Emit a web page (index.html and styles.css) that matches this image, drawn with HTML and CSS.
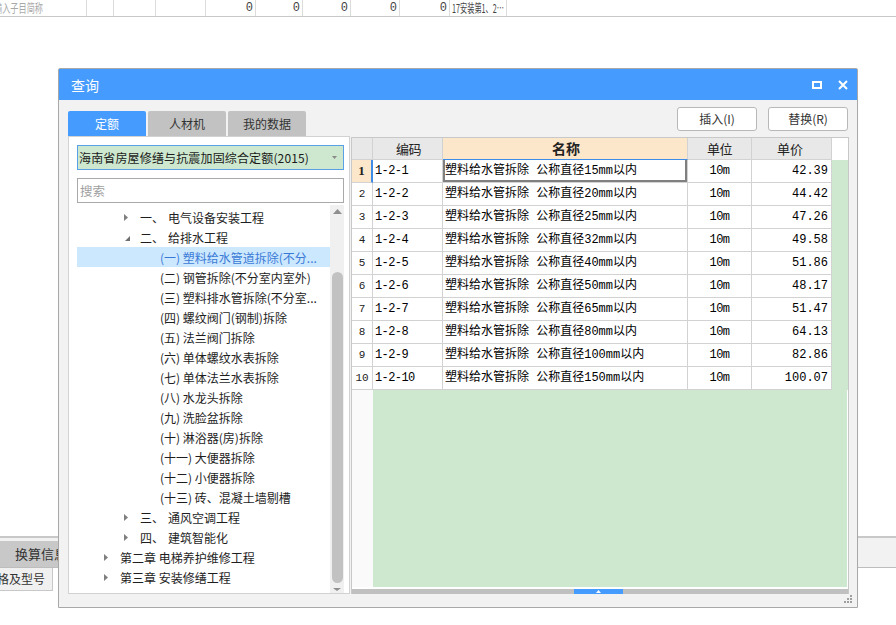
FILE: index.html
```html
<!DOCTYPE html>
<html lang="zh">
<head>
<meta charset="utf-8">
<title>查询</title>
<link rel="stylesheet" href="styles.css">
</head>
<body>
<div class="page">
  <div class="bg-row">
    <div class="bc c1 lbl"><span class="cond">输入子目简称</span></div>
    <div class="bc c2"></div>
    <div class="bc c3"></div>
    <div class="bc c4"></div>
    <div class="bc c5 num">0</div>
    <div class="bc c6 num">0</div>
    <div class="bc c7 num">0</div>
    <div class="bc c8 num">0</div>
    <div class="bc c9 num">0</div>
    <div class="bc c10 txt"><span class="cond narrow">17安装第1、2…</span></div>
    <div class="bc c11"></div>
  </div>
  <div class="bg-bottom">
    <div class="bg-tabs"><div class="bg-tab">换算信息</div></div>
    <div class="bg-head"><div class="bg-hc">规格及型号</div></div>
  </div>
</div>

<div class="dialog">
  <div class="titlebar">
    <span class="title">查询</span>
    <div class="tb-icons">
      <svg width="10" height="8" viewBox="0 0 10 8"><rect x="1" y="1" width="8" height="6" fill="none" stroke="#fff" stroke-width="2"/></svg>
      <svg width="10" height="10" viewBox="0 0 10 10"><path d="M1 1L9 9M9 1L1 9" stroke="#fff" stroke-width="2"/></svg>
    </div>
  </div>
  <div class="dbody">
    <div class="toolbar">
      <div class="tabs">
        <div class="tab active">定额</div>
        <div class="tab">人材机</div>
        <div class="tab">我的数据</div>
      </div>
      <div class="btns">
        <div class="btn">插入(I)</div>
        <div class="btn">替换(R)</div>
      </div>
    </div>
    <div class="main">
      <div class="left">
        <div class="combo">
          <span class="combo-text">海南省房屋修缮与抗震加固综合定额(2015)</span>
          <svg width="5" height="3" viewBox="0 0 5 3"><path d="M0 0H5L2.5 3Z" fill="#8a8a8a"/></svg>
        </div>
        <div class="search">搜索</div>
        <div class="tree">
          <div class="tree-list">
            <div class="tr lv1"><span class="tw"><svg width="4" height="7" viewBox="0 0 4 7"><path d="M0 0L4 3.5L0 7Z" fill="#7f7f7f"/></svg></span><span class="tn">一、</span><span>电气设备安装工程</span></div>
            <div class="tr lv1"><span class="tw"><svg class="exp" width="5" height="5" viewBox="0 0 5 5"><path d="M5 0V5H0Z" fill="#6f6f6f"/></svg></span><span class="tn">二、</span><span>给排水工程</span></div>
            <div class="tr lv2 sel"><span class="tw"></span><span>(一) 塑料给水管道拆除(不分...</span></div>
            <div class="tr lv2"><span class="tw"></span><span>(二) 钢管拆除(不分室内室外)</span></div>
            <div class="tr lv2"><span class="tw"></span><span>(三) 塑料排水管拆除(不分室...</span></div>
            <div class="tr lv2"><span class="tw"></span><span>(四) 螺纹阀门(钢制)拆除</span></div>
            <div class="tr lv2"><span class="tw"></span><span>(五) 法兰阀门拆除</span></div>
            <div class="tr lv2"><span class="tw"></span><span>(六) 单体螺纹水表拆除</span></div>
            <div class="tr lv2"><span class="tw"></span><span>(七) 单体法兰水表拆除</span></div>
            <div class="tr lv2"><span class="tw"></span><span>(八) 水龙头拆除</span></div>
            <div class="tr lv2"><span class="tw"></span><span>(九) 洗脸盆拆除</span></div>
            <div class="tr lv2"><span class="tw"></span><span>(十) 淋浴器(房)拆除</span></div>
            <div class="tr lv2"><span class="tw"></span><span>(十一) 大便器拆除</span></div>
            <div class="tr lv2"><span class="tw"></span><span>(十二) 小便器拆除</span></div>
            <div class="tr lv2"><span class="tw"></span><span>(十三) 砖、混凝土墙剔槽</span></div>
            <div class="tr lv1"><span class="tw"><svg width="4" height="7" viewBox="0 0 4 7"><path d="M0 0L4 3.5L0 7Z" fill="#7f7f7f"/></svg></span><span class="tn">三、</span><span>通风空调工程</span></div>
            <div class="tr lv1"><span class="tw"><svg width="4" height="7" viewBox="0 0 4 7"><path d="M0 0L4 3.5L0 7Z" fill="#7f7f7f"/></svg></span><span class="tn">四、</span><span>建筑智能化</span></div>
            <div class="tr lv0"><span class="tw"><svg width="4" height="7" viewBox="0 0 4 7"><path d="M0 0L4 3.5L0 7Z" fill="#7f7f7f"/></svg></span><span>第二章 电梯养护维修工程</span></div>
            <div class="tr lv0"><span class="tw"><svg width="4" height="7" viewBox="0 0 4 7"><path d="M0 0L4 3.5L0 7Z" fill="#7f7f7f"/></svg></span><span>第三章 安装修缮工程</span></div>
          </div>
          <div class="vscroll">
            <div class="varrow up"><svg width="9" height="5" viewBox="0 0 9 5"><path d="M0 5L4.5 0L9 5Z" fill="#8f8f8f"/></svg></div>
            <div class="vthumb"></div>
            <div class="varrow down"><svg width="8" height="3" viewBox="0 0 8 3"><path d="M0 0H8L4 3Z" fill="#8f8f8f"/></svg></div>
          </div>
        </div>
      </div>
      <div class="grid">
        <div class="grid-body">
          <div class="gr head">
            <div class="gc rn"></div>
            <div class="gc code">编码</div>
            <div class="gc name">名称</div>
            <div class="gc unit">单位</div>
            <div class="gc price">单价</div>
            <div class="gc tail"></div>
          </div>
          <div class="gr cur"><div class="gc rn">1</div><div class="gc code">1-2-1</div><div class="gc name">塑料给水管拆除 公称直径15mm以内</div><div class="gc unit">10m</div><div class="gc price">42.39</div><div class="gc tail"></div></div>
          <div class="gr"><div class="gc rn">2</div><div class="gc code">1-2-2</div><div class="gc name">塑料给水管拆除 公称直径20mm以内</div><div class="gc unit">10m</div><div class="gc price">44.42</div><div class="gc tail"></div></div>
          <div class="gr"><div class="gc rn">3</div><div class="gc code">1-2-3</div><div class="gc name">塑料给水管拆除 公称直径25mm以内</div><div class="gc unit">10m</div><div class="gc price">47.26</div><div class="gc tail"></div></div>
          <div class="gr"><div class="gc rn">4</div><div class="gc code">1-2-4</div><div class="gc name">塑料给水管拆除 公称直径32mm以内</div><div class="gc unit">10m</div><div class="gc price">49.58</div><div class="gc tail"></div></div>
          <div class="gr"><div class="gc rn">5</div><div class="gc code">1-2-5</div><div class="gc name">塑料给水管拆除 公称直径40mm以内</div><div class="gc unit">10m</div><div class="gc price">51.86</div><div class="gc tail"></div></div>
          <div class="gr"><div class="gc rn">6</div><div class="gc code">1-2-6</div><div class="gc name">塑料给水管拆除 公称直径50mm以内</div><div class="gc unit">10m</div><div class="gc price">48.17</div><div class="gc tail"></div></div>
          <div class="gr"><div class="gc rn">7</div><div class="gc code">1-2-7</div><div class="gc name">塑料给水管拆除 公称直径65mm以内</div><div class="gc unit">10m</div><div class="gc price">51.47</div><div class="gc tail"></div></div>
          <div class="gr"><div class="gc rn">8</div><div class="gc code">1-2-8</div><div class="gc name">塑料给水管拆除 公称直径80mm以内</div><div class="gc unit">10m</div><div class="gc price">64.13</div><div class="gc tail"></div></div>
          <div class="gr"><div class="gc rn">9</div><div class="gc code">1-2-9</div><div class="gc name">塑料给水管拆除 公称直径100mm以内</div><div class="gc unit">10m</div><div class="gc price">82.86</div><div class="gc tail"></div></div>
          <div class="gr"><div class="gc rn">10</div><div class="gc code">1-2-10</div><div class="gc name">塑料给水管拆除 公称直径150mm以内</div><div class="gc unit">10m</div><div class="gc price">100.07</div><div class="gc tail"></div></div>
          <div class="gfill"><div class="gfill-rn"></div><div class="gfill-green"></div></div>
        </div>
        <div class="hgap"></div>
        <div class="hscroll"><div class="hthumb"><svg width="5" height="3" viewBox="0 0 5 3"><path d="M0 3L2.5 0L5 3Z" fill="#fff"/></svg></div></div>
      </div>
    </div>
  </div>
  <svg class="grip" width="8" height="8" viewBox="0 0 8 8" fill="#a0a0a0">
    <rect x="6" y="0" width="2" height="2"/>
    <rect x="3" y="3" width="2" height="2"/><rect x="6" y="3" width="2" height="2"/>
    <rect x="0" y="6" width="2" height="2"/><rect x="3" y="6" width="2" height="2"/><rect x="6" y="6" width="2" height="2"/>
  </svg>
</div>
</body>
</html>
```

FILE: styles.css
```css
* { box-sizing: border-box; }
html, body { margin: 0; padding: 0; }
body {
  width: 896px;
  height: 625px;
  overflow: hidden;
  background: #fff;
  position: relative;
  font-family: "Noto Sans CJK SC", "Noto Sans", sans-serif;
  font-size: 12px;
  color: #1e1e1e;
}
.page { height: 625px; }

/* background sheet */
.bg-row {
  display: flex;
  height: 17px;
  border-bottom: 1px solid #c8c8c8;
  line-height: 16px;
  font-size: 12px;
}
.bc { flex: none; border-right: 1px solid #dcdcdc; white-space: nowrap; overflow: hidden; }
.c1 { width: 87px; }
.c2 { width: 27px; }
.c3 { width: 42px; }
.c4 { width: 50px; }
.c5 { width: 50px; }
.c6 { width: 47px; }
.c7 { width: 48px; }
.c8 { width: 49px; }
.c9 { width: 50px; }
.c10 { width: 57px; }
.c11 { flex: 1; border-right: none; }
.lbl { color: #a8a8a8; }
.cond {
  display: inline-block;
  transform: scaleX(0.68);
  transform-origin: left center;
}
.lbl .cond { margin-left: -6px; }
.cond.narrow { transform: scaleX(0.6); }
.num { text-align: right; padding-right: 2px; color: #444; font-family: "Liberation Mono", monospace; }
.txt { color: #444; padding-left: 2px; }

.bg-bottom { margin-top: 519px; }
.bg-tabs {
  display: flex;
  height: 32px;
  border-top: 2px solid #c8c8c8;
  border-bottom: 1px solid #bdbdbd;
  background: #f2f2f2;
}
.bg-tab {
  width: 120px;
  margin-top: 3px;
  background: #c8c8c8;
  padding-left: 15px;
  line-height: 26px;
  font-size: 13px;
  color: #333;
}
.bg-head { display: flex; height: 23px; }
.bg-hc {
  width: 53px;
  background: #f0f0f0;
  border-right: 1px solid #c8c8c8;
  border-bottom: 1px solid #c8c8c8;
  line-height: 22px;
  font-size: 12px;
  color: #333;
  white-space: nowrap;
  overflow: hidden;
  text-indent: -15px;
}

/* dialog window */
.dialog {
  position: absolute;
  left: 58px;
  top: 68px;
  width: 800px;
  height: 540px;
  border: 1px solid #a8a8a8;
  border-radius: 2px 2px 0 0;
  background: #f2f2f2;
  display: flex;
  flex-direction: column;
}
.titlebar {
  height: 31px;
  flex: none;
  background: #459cfe;
  display: flex;
  align-items: center;
  padding: 0 9px 0 12px;
  color: #fff;
  font-size: 14px;
}
.title { flex: 1; }
.tb-icons { display: flex; align-items: center; gap: 16px; }
.tb-icons svg { display: block; }

.dbody { flex: 1; display: flex; flex-direction: column; }
.toolbar {
  height: 36px;
  flex: none;
  display: flex;
  justify-content: space-between;
  padding: 0 9px;
}
.tabs { display: flex; gap: 2px; align-self: flex-end; }
.tab {
  width: 78px;
  height: 25px;
  line-height: 25px;
  text-align: center;
  background: #c2c2c2;
  color: #333;
  border-radius: 2px 2px 0 0;
}
.tab.active { background: #459cfe; color: #fff; }
.btns { display: flex; gap: 11px; margin-top: 7px; }
.btn {
  width: 80px;
  height: 24px;
  line-height: 22px;
  text-align: center;
  background: #fff;
  border: 1px solid #b8b8b8;
  border-radius: 3px;
  color: #333;
}

.main {
  height: 458px;
  flex: none;
  display: flex;
  gap: 1px;
  padding: 0 8px 0 9px;
}

/* left panel */
.left {
  width: 282px;
  flex: none;
  background: #fff;
  border: 1px solid #d2d2d2;
  padding: 8px 5px 0 8px;
  display: flex;
  flex-direction: column;
}
.combo {
  height: 25px;
  flex: none;
  background: #cde8cf;
  border: 1px solid #5aa0e6;
  display: flex;
  align-items: center;
  justify-content: space-between;
  padding: 0 6px 0 1px;
}
.combo-text { font-size: 12px; color: #1a1a1a; white-space: nowrap; letter-spacing: 0.15px; }
.combo svg { display: block; }
.search {
  height: 25px;
  flex: none;
  margin-top: 8px;
  border: 1px solid #a9a9a9;
  line-height: 23px;
  padding-left: 2px;
  color: #a0a0a0;
  font-size: 12.5px;
}
.tree {
  margin-top: 2px;
  height: 388px;
  display: flex;
}
.tree-list { flex: 1; padding-top: 2px; }
.tr {
  display: flex;
  align-items: center;
  height: 20px;
  white-space: nowrap;
  font-size: 12px;
}
.lv0 { padding-left: 27px; }
.lv1 { padding-left: 47px; }
.lv2 { padding-left: 67px; }
.tw { width: 16px; flex: none; display: flex; align-items: center; }
.tw svg { display: block; }
.tw .exp { margin-left: 1px; margin-top: 3px; }
.tn { width: 28px; flex: none; }
.tr.sel { background: #cce8ff; color: #3a7ad6; }

.vscroll {
  width: 14px;
  flex: none;
  background: #f0f0f0;
  display: flex;
  flex-direction: column;
}
.varrow { display: flex; justify-content: center; }
.varrow.up { height: 12px; padding-top: 4px; padding-left: 1px; }
.varrow.down { height: 8px; margin-top: 2px; padding-top: 3px; }
.varrow svg { display: block; }
.vthumb {
  margin: 55px 1px 0 2px;
  height: 311px;
  background: #c2c2c2;
  border-radius: 6px;
}

/* right grid */
.grid {
  width: 498px;
  flex: none;
  margin-top: 1px;
  border: 1px solid #c8c8c8;
  border-bottom: none;
  background: #fff;
  display: flex;
  flex-direction: column;
}
.grid-body { flex: 1; display: flex; flex-direction: column; }
.gr { display: flex; height: 23px; flex: none; }
.gr.head { height: 22px; }
.gc {
  flex: none;
  border-right: 1px solid #d2d2d2;
  border-bottom: 1px solid #d2d2d2;
  white-space: nowrap;
  overflow: hidden;
  font-family: "Liberation Mono", "Noto Sans CJK SC", monospace;
  font-size: 12px;
  line-height: 22px;
  color: #000;
}
.gr.head .gc {
  background: #e8e8e8;
  font-family: "Noto Sans CJK SC", sans-serif;
  font-size: 13px;
  line-height: 21px;
  text-align: center;
  color: #222;
}
.gr.head .gc.name {
  background: #fde7ca;
  font-weight: bold;
  font-size: 14px;
  border-bottom-color: #3d8ce8;
}
.gr.head .gc.tail { background: #fff; border: none; }
.rn { width: 21px; text-align: center; font-size: 11px; color: #222; }
.code { width: 70px; padding-left: 2px; letter-spacing: -0.6px; }
.name { width: 245px; padding-left: 2px; }
.unit { width: 64px; text-align: center; letter-spacing: -0.5px; }
.price { width: 80px; text-align: right; padding-right: 3px; }
.tail { flex: 1; border: none; background: #cde8cf; }
.gr.cur .rn { background: #fde7ca; font-weight: bold; font-family: "Liberation Serif", serif; font-size: 13px; border-right: 2px solid #3d8ce8; }
.gr.cur .name { box-shadow: inset 2px 0 #808080, inset -2px 0 #808080, inset 0 -2px #808080; }
.gfill { flex: 1; display: flex; }
.gfill-rn { width: 21px; flex: none; background: #fafafa; }
.gfill-green { flex: 1; background: #cde8cf; margin-right: 1px; }
.hgap { height: 2px; flex: none; background: #fff; }
.hscroll {
  height: 5px;
  flex: none;
  background: #c0c0c0;
  padding-left: 222px;
}
.hthumb {
  width: 49px;
  height: 5px;
  background: #459cfe;
  display: flex;
  justify-content: center;
  padding-top: 1px;
}
.hthumb svg { display: block; }

.grip { position: absolute; right: 5px; bottom: 4px; display: block; }
```
